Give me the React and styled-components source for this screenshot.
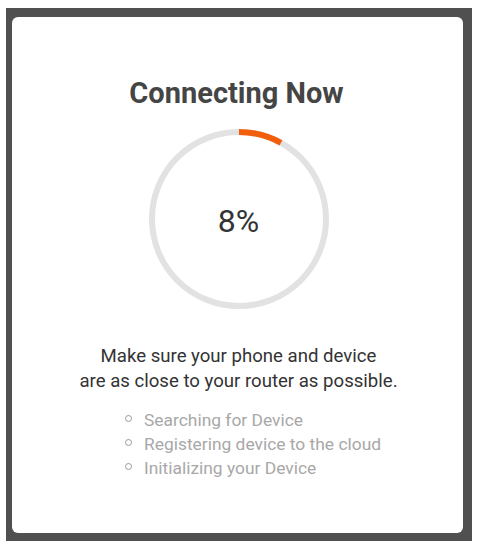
import React from "react";
import styled, { createGlobalStyle } from "styled-components";

const Global = createGlobalStyle`
  html, body { margin: 0; padding: 0; background: #ffffff; }
  body { font-family: Roboto, "Noto Sans", Arial, sans-serif; }
`;

const Frame = styled.div`
  box-sizing: border-box;
  width: 466px;
  height: 533px;
  margin: 8px 0 0 6px;
  padding: 9px 9px 8px 6px;
  background: #505050;
`;

const Card = styled.div`
  box-sizing: border-box;
  height: 100%;
  background: #ffffff;
  border-radius: 6px;
  display: flex;
  flex-direction: column;
  align-items: center;
  padding-top: 60px;
`;

const Title = styled.h1`
  margin: 0 0 0 -2px;
  font-size: 29px;
  line-height: 32px;
  font-weight: 700;
  color: #454545;
`;

const RingWrap = styled.div`
  position: relative;
  width: 180px;
  height: 180px;
  margin-top: 20px;
  margin-left: 2px;
`;

const RingSvg = styled.svg`
  display: block;
`;

const Percent = styled.div`
  position: absolute;
  inset: 0;
  display: flex;
  align-items: center;
  justify-content: center;
  font-size: 32px;
  font-weight: 400;
  color: #333333;
  padding-top: 3px;
`;

const Message = styled.p`
  margin: 35px 0 0 2px;
  text-align: center;
  font-size: 18.6px;
  line-height: 25px;
  color: #333333;
`;

const Steps = styled.ul`
  list-style: none;
  margin: 14px 0 0 113px;
  padding: 0;
  align-self: flex-start;
`;

const Step = styled.li`
  display: flex;
  align-items: center;
  gap: 12px;
  font-size: 17.4px;
  line-height: 24px;
  color: #a8a8a8;
`;

const Dot = styled.span`
  box-sizing: border-box;
  width: 7px;
  height: 7px;
  border: 1.5px solid #9a9a9a;
  border-radius: 50%;
  flex: none;
  margin-top: -3px;
`;

const Ring = ({ value }) => {
  const r = 87;
  const c = 2 * Math.PI * r;
  const len = (value / 100) * c;
  return (
    <RingSvg width="180" height="180" viewBox="0 0 180 180">
      <circle cx="90" cy="90" r={r} fill="none" stroke="#e2e2e2" strokeWidth="6" />
      <circle
        cx="90"
        cy="90"
        r={r}
        fill="none"
        stroke="#f25f0c"
        strokeWidth="6"
        strokeDasharray={`${len} ${c}`}
        transform="rotate(-90 90 90)"
      />
    </RingSvg>
  );
};

const steps = [
  "Searching for Device",
  "Registering device to the cloud",
  "Initializing your Device",
];

export default function App() {
  return (
    <>
      <Global />
      <Frame>
        <Card>
          <Title>Connecting Now</Title>
          <RingWrap>
            <Ring value={8} />
            <Percent>8%</Percent>
          </RingWrap>
          <Message>
            Make sure your phone and device
            <br />
            are as close to your router as possible.
          </Message>
          <Steps>
            {steps.map((s) => (
              <Step key={s}>
                <Dot />
                {s}
              </Step>
            ))}
          </Steps>
        </Card>
      </Frame>
    </>
  );
}
